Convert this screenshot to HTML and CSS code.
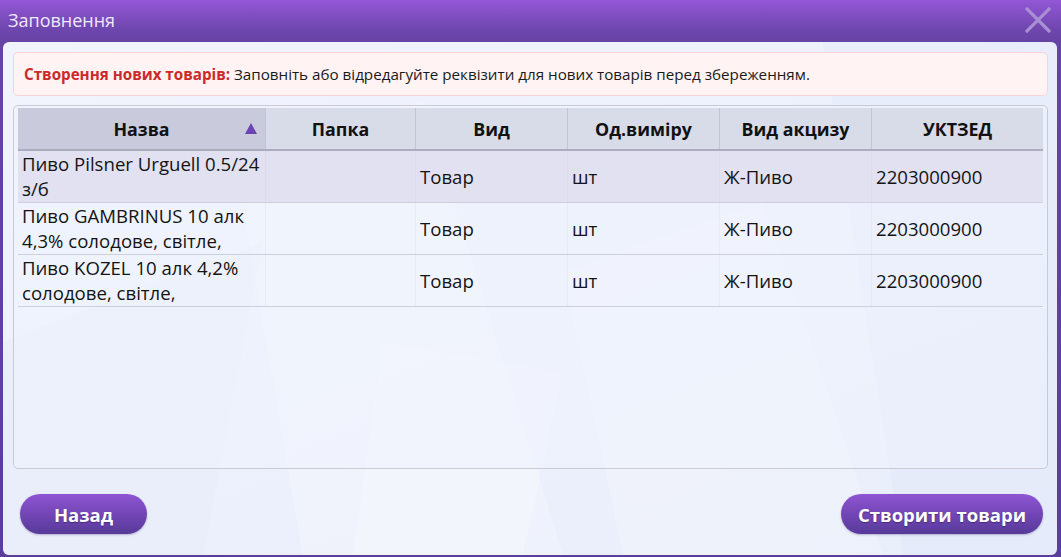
FILE: index.html
```html
<!DOCTYPE html>
<html lang="uk">
<head>
<meta charset="utf-8">
<title>Заповнення</title>
<link rel="stylesheet" href="styles.css">
</head>
<body>
<div class="window">
  <div class="titlebar">
    <span class="title">Заповнення</span>
    <span class="close" aria-label="Закрити">
      <svg width="26" height="26" viewBox="0 0 26 26"><path d="M2 2L24 24M24 2L2 24" stroke="#a88ed3" stroke-width="3.2" stroke-linecap="square"/></svg>
    </span>
  </div>
  <div class="panel">
    <svg class="decor" viewBox="0 0 1054 513" preserveAspectRatio="none" aria-hidden="true">
      <polygon points="230,110 420,60 560,513 300,513" fill="#ffffff" opacity="0.22"/>
      <polygon points="560,230 760,160 880,513 620,513" fill="#ffffff" opacity="0.2"/>
      <polygon points="820,0 1054,0 1054,513 900,513" fill="#dfe6f8" opacity="0.35"/>
      <polygon points="0,300 260,200 200,513 0,513" fill="#e6ebf8" opacity="0.4"/>
      <polygon points="380,300 560,330 520,513 350,513" fill="#ffffff" opacity="0.22"/>
    </svg>
    <div class="content">
      <div class="alert"><b>Створення нових товарів:</b> Заповніть або відредагуйте реквізити для нових товарів перед збереженням.</div>
      <div class="grid-box">
        <div class="grid">
          <div class="head">
            <div class="hc sorted"><span>Назва</span><i class="arrow"></i></div>
            <div class="hc">Папка</div>
            <div class="hc">Вид</div>
            <div class="hc">Од.виміру</div>
            <div class="hc">Вид акцизу</div>
            <div class="hc">УКТЗЕД</div>
          </div>
          <div class="row selected">
            <div class="c name">Пиво Pilsner Urguell 0.5/24 з/б</div>
            <div class="c"></div>
            <div class="c">Товар</div>
            <div class="c">шт</div>
            <div class="c">Ж-Пиво</div>
            <div class="c">2203000900</div>
          </div>
          <div class="row">
            <div class="c name">Пиво GAMBRINUS 10 алк 4,3% солодове, світле,</div>
            <div class="c"></div>
            <div class="c">Товар</div>
            <div class="c">шт</div>
            <div class="c">Ж-Пиво</div>
            <div class="c">2203000900</div>
          </div>
          <div class="row">
            <div class="c name">Пиво KOZEL 10 алк 4,2% солодове, світле,</div>
            <div class="c"></div>
            <div class="c">Товар</div>
            <div class="c">шт</div>
            <div class="c">Ж-Пиво</div>
            <div class="c">2203000900</div>
          </div>
        </div>
      </div>
      <div class="actions">
        <button class="btn back">Назад</button>
        <button class="btn create">Створити товари</button>
      </div>
    </div>
  </div>
</div>
</body>
</html>
```
FILE: styles.css
```css
* { box-sizing: border-box; }
html, body { margin: 0; padding: 0; }
body {
  width: 1061px;
  height: 557px;
  overflow: hidden;
  background: #583d99;
  font-family: "Open Sans", "Noto Sans", sans-serif;
  color: #111;
}
.window {
  height: 557px;
  display: flex;
  flex-direction: column;
  padding: 0 4px 2px 3px;
  background: linear-gradient(180deg, #9357d6 0px, #6d46ad 30px, #6644a4 42px, #5a3e9b 100%);
}
.titlebar {
  height: 42px;
  flex: none;
  display: flex;
  align-items: center;
  justify-content: space-between;
  padding: 0 6px 2px 5px;
}
.title {
  font-size: 18px;
  color: #efe9fb;
}
.close { display: flex; margin-top: -1px; }
.panel {
  flex: 1;
  position: relative;
  border-radius: 6px;
  overflow: hidden;
  background: linear-gradient(160deg, #f1f4fd 0%, #edf1fc 45%, #e9eefb 100%);
}
.decor {
  position: absolute;
  inset: 0;
  width: 100%;
  height: 100%;
}
.content {
  position: relative;
  height: 100%;
  display: flex;
  flex-direction: column;
  padding: 10px 9px 21px 10px;
}
.alert {
  height: 44px;
  flex: none;
  display: flex;
  align-items: center;
  padding: 0 10px 1px 10px;
  background: #fff3f3;
  border: 1px solid #fbd3d6;
  border-radius: 5px;
  font-size: 15.2px;
  color: #1a1a1a;
  white-space: pre;
}
.alert b { color: #cc2a2a; font-weight: 700; }
.grid-box {
  margin-top: 9px;
  height: 364px;
  flex: none;
  border: 1px solid #c9cad3;
  border-radius: 5px;
  padding: 2px 4px 0 4px;
  background: rgba(240, 244, 253, 0.5);
}
.grid { display: flex; flex-direction: column; }
.head, .row {
  display: grid;
  grid-template-columns: 248px 150px 152px 152px 152px 171px;
}
.head {
  height: 43px;
  background: #d8dbe8;
  border-bottom: 2px solid #abadbd;
}
.hc {
  display: flex;
  align-items: center;
  justify-content: center;
  font-weight: 700;
  font-size: 17.8px;
  border-right: 1px solid #c3c5d3;
  position: relative;
  padding-top: 1px;
}
.hc:last-child { border-right: none; }
.hc.sorted { background: #c9cbdd; }
.arrow {
  position: absolute;
  right: 8px;
  top: 15px;
  width: 0;
  height: 0;
  border-left: 6px solid transparent;
  border-right: 6px solid transparent;
  border-bottom: 11px solid #6a44b0;
}
.row {
  height: 52px;
  border-bottom: 1px solid #cdd0dc;
}
.row.selected { background: #e1e1f1; }
.c {
  display: flex;
  align-items: center;
  padding: 0 2px 0 4px;
  font-size: 18.6px;
  color: #141414;
  border-right: 1px solid rgba(200, 204, 222, 0.2);
  overflow: hidden;
}
.c:last-child { border-right: none; }
.c.name {
  align-items: flex-start;
  line-height: 25px;
  padding-top: 0;
}
.actions {
  margin-top: auto;
  display: flex;
  justify-content: space-between;
  padding: 0 5px 0 7px;
}
.btn {
  height: 40px;
  border: none;
  border-radius: 20px;
  background: linear-gradient(180deg, #8e55d2 0%, #7346b6 50%, #563a98 100%);
  color: #fff;
  font-family: "Open Sans", "Noto Sans", sans-serif;
  font-weight: 700;
  font-size: 18.5px;
  text-shadow: 0 1px 1px rgba(40, 20, 80, 0.5);
  box-shadow: 0 1px 2px rgba(60, 40, 110, 0.3);
  padding: 0;
}
.back { width: 127px; }
.create { width: 202px; }
```
